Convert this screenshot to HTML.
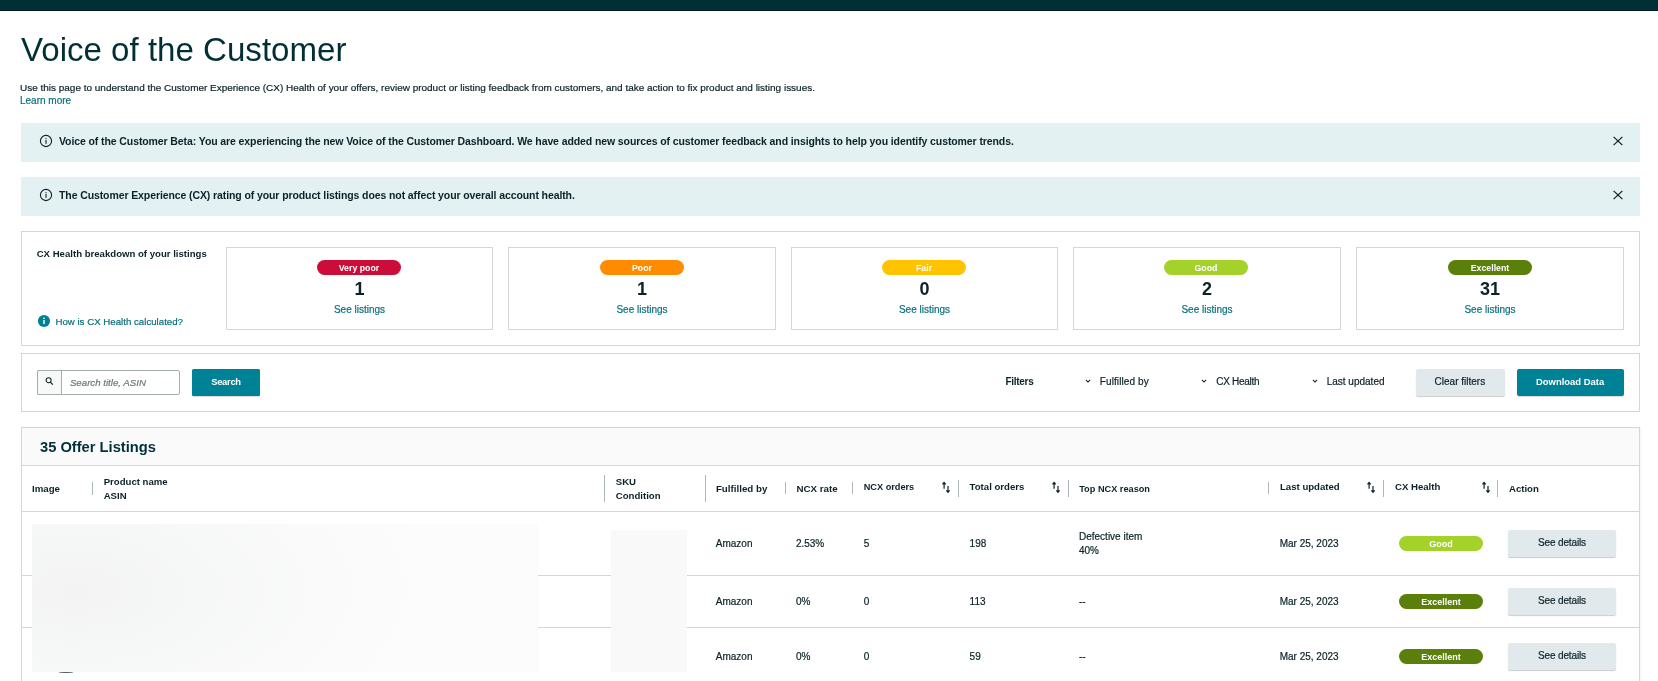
<!DOCTYPE html>
<html><head><meta charset="utf-8"><title>Voice of the Customer</title>
<style>
html,body{margin:0;padding:0;background:#fff;}
body{width:1658px;height:681px;overflow:hidden;position:relative;font-family:"Liberation Sans", sans-serif;}
div{box-sizing:content-box;}
</style></head><body>
<div style="position:absolute;left:0;top:0;width:1658px;height:681px;will-change:transform">
<div style="position:absolute;left:0px;top:0px;width:1658px;height:10px;background:#012F36;border-bottom:1px solid #001F25"></div>
<div style="position:absolute;top:33.00px;font-size:33.1px;line-height:33.1px;color:#002F36;font-weight:normal;white-space:nowrap;left:21.00px;">Voice of the Customer</div>
<div style="position:absolute;top:83.00px;font-size:9.97px;line-height:9.97px;color:#0B2227;font-weight:normal;white-space:nowrap;-webkit-text-stroke:0.2px #0B2227;left:20.00px;">Use this page to understand the Customer Experience (CX) Health of your offers, review product or listing feedback from customers, and take action to fix product and listing issues.</div>
<div style="position:absolute;top:96.00px;font-size:10px;line-height:10px;color:#0A6F7D;font-weight:normal;white-space:nowrap;-webkit-text-stroke:0.2px #0A6F7D;left:20.00px;">Learn more</div>
<div style="position:absolute;left:21px;top:123px;width:1619px;height:39px;background:#E3F1F3"></div>
<svg style="position:absolute;left:38.8px;top:133.8px" width="14" height="14" viewBox="0 0 14 14"><circle cx="7" cy="7" r="5.6" fill="none" stroke="#0B2227" stroke-width="1.1"/><rect x="6.45" y="6" width="1.1" height="3.8" fill="#0B2227"/><rect x="6.45" y="4.1" width="1.1" height="1.1" fill="#0B2227"/></svg>
<div style="position:absolute;top:136.00px;font-size:10.5px;line-height:10.5px;color:#0B2227;font-weight:bold;white-space:nowrap;left:59.00px;letter-spacing:-0.1px;">Voice of the Customer Beta: You are experiencing the new Voice of the Customer Dashboard. We have added new sources of customer feedback and insights to help you identify customer trends.</div>
<svg style="position:absolute;left:1611.5px;top:135.1px" width="12" height="12" viewBox="0 0 12 12"><path d="M1.6 1.9L10.4 10.1M10.4 1.9L1.6 10.1" stroke="#0B2227" stroke-width="1.25" fill="none"/></svg>
<div style="position:absolute;left:21px;top:177px;width:1619px;height:39px;background:#E3F1F3"></div>
<svg style="position:absolute;left:38.8px;top:187.8px" width="14" height="14" viewBox="0 0 14 14"><circle cx="7" cy="7" r="5.6" fill="none" stroke="#0B2227" stroke-width="1.1"/><rect x="6.45" y="6" width="1.1" height="3.8" fill="#0B2227"/><rect x="6.45" y="4.1" width="1.1" height="1.1" fill="#0B2227"/></svg>
<div style="position:absolute;top:190.00px;font-size:10.5px;line-height:10.5px;color:#0B2227;font-weight:bold;white-space:nowrap;left:59.00px;letter-spacing:-0.1px;">The Customer Experience (CX) rating of your product listings does not affect your overall account health.</div>
<svg style="position:absolute;left:1611.5px;top:189.1px" width="12" height="12" viewBox="0 0 12 12"><path d="M1.6 1.9L10.4 10.1M10.4 1.9L1.6 10.1" stroke="#0B2227" stroke-width="1.25" fill="none"/></svg>
<div style="position:absolute;left:21px;top:231px;width:1617px;height:113px;border:1px solid #D5D6D6"></div>
<div style="position:absolute;top:249.00px;font-size:9.6px;line-height:9.6px;color:#0B2227;font-weight:bold;white-space:nowrap;left:36.70px;">CX Health breakdown of your listings</div>
<svg style="position:absolute;left:37px;top:313.9px" width="14" height="14" viewBox="0 0 14 14"><circle cx="7" cy="7" r="6.1" fill="#008296"/><rect x="6.3" y="6" width="1.4" height="4" fill="#fff"/><rect x="6.3" y="3.6" width="1.4" height="1.4" fill="#fff"/></svg>
<div style="position:absolute;top:317.00px;font-size:9.7px;line-height:9.7px;color:#0A6F7D;font-weight:normal;white-space:nowrap;-webkit-text-stroke:0.2px #0A6F7D;left:55.40px;">How is CX Health calculated?</div>
<div style="position:absolute;left:226px;top:247px;width:265px;height:81px;border:1px solid #D5D6D6"></div>
<div style="position:absolute;left:317px;top:260px;width:84px;height:15px;background:#CC0C39;border-radius:8px"></div>
<div style="position:absolute;top:264.00px;font-size:8.8px;line-height:8.8px;color:#fff;font-weight:bold;white-space:nowrap;left:59.00px;width:600px;text-align:center;">Very poor</div>
<div style="position:absolute;top:280.00px;font-size:18px;line-height:18px;color:#0B2227;font-weight:bold;white-space:nowrap;left:59.50px;width:600px;text-align:center;">1</div>
<div style="position:absolute;top:305.00px;font-size:10px;line-height:10px;color:#0A6F7D;font-weight:normal;white-space:nowrap;-webkit-text-stroke:0.2px #0A6F7D;left:59.50px;width:600px;text-align:center;">See listings</div>
<div style="position:absolute;left:508px;top:247px;width:266px;height:81px;border:1px solid #D5D6D6"></div>
<div style="position:absolute;left:600px;top:260px;width:84px;height:15px;background:#FF8C00;border-radius:8px"></div>
<div style="position:absolute;top:264.00px;font-size:8.8px;line-height:8.8px;color:#fff;font-weight:bold;white-space:nowrap;left:342.00px;width:600px;text-align:center;">Poor</div>
<div style="position:absolute;top:280.00px;font-size:18px;line-height:18px;color:#0B2227;font-weight:bold;white-space:nowrap;left:342.00px;width:600px;text-align:center;">1</div>
<div style="position:absolute;top:305.00px;font-size:10px;line-height:10px;color:#0A6F7D;font-weight:normal;white-space:nowrap;-webkit-text-stroke:0.2px #0A6F7D;left:342.00px;width:600px;text-align:center;">See listings</div>
<div style="position:absolute;left:791px;top:247px;width:265px;height:81px;border:1px solid #D5D6D6"></div>
<div style="position:absolute;left:882px;top:260px;width:84px;height:15px;background:#FFC300;border-radius:8px"></div>
<div style="position:absolute;top:264.00px;font-size:8.8px;line-height:8.8px;color:#fff;font-weight:bold;white-space:nowrap;left:624.00px;width:600px;text-align:center;">Fair</div>
<div style="position:absolute;top:280.00px;font-size:18px;line-height:18px;color:#0B2227;font-weight:bold;white-space:nowrap;left:624.50px;width:600px;text-align:center;">0</div>
<div style="position:absolute;top:305.00px;font-size:10px;line-height:10px;color:#0A6F7D;font-weight:normal;white-space:nowrap;-webkit-text-stroke:0.2px #0A6F7D;left:624.50px;width:600px;text-align:center;">See listings</div>
<div style="position:absolute;left:1073px;top:247px;width:266px;height:81px;border:1px solid #D5D6D6"></div>
<div style="position:absolute;left:1164px;top:260px;width:84px;height:15px;background:#A4D12A;border-radius:8px"></div>
<div style="position:absolute;top:264.00px;font-size:8.8px;line-height:8.8px;color:#fff;font-weight:bold;white-space:nowrap;left:906.00px;width:600px;text-align:center;">Good</div>
<div style="position:absolute;top:280.00px;font-size:18px;line-height:18px;color:#0B2227;font-weight:bold;white-space:nowrap;left:907.00px;width:600px;text-align:center;">2</div>
<div style="position:absolute;top:305.00px;font-size:10px;line-height:10px;color:#0A6F7D;font-weight:normal;white-space:nowrap;-webkit-text-stroke:0.2px #0A6F7D;left:907.00px;width:600px;text-align:center;">See listings</div>
<div style="position:absolute;left:1356px;top:247px;width:266px;height:81px;border:1px solid #D5D6D6"></div>
<div style="position:absolute;left:1448px;top:260px;width:84px;height:15px;background:#5A7F0B;border-radius:8px"></div>
<div style="position:absolute;top:264.00px;font-size:8.8px;line-height:8.8px;color:#fff;font-weight:bold;white-space:nowrap;left:1190.00px;width:600px;text-align:center;">Excellent</div>
<div style="position:absolute;top:280.00px;font-size:18px;line-height:18px;color:#0B2227;font-weight:bold;white-space:nowrap;left:1190.00px;width:600px;text-align:center;">31</div>
<div style="position:absolute;top:305.00px;font-size:10px;line-height:10px;color:#0A6F7D;font-weight:normal;white-space:nowrap;-webkit-text-stroke:0.2px #0A6F7D;left:1190.00px;width:600px;text-align:center;">See listings</div>
<div style="position:absolute;left:21px;top:353px;width:1617px;height:57px;border:1px solid #D5D6D6"></div>
<div style="position:absolute;left:37px;top:370px;width:24px;height:23px;border:1px solid #A6ADAD;border-right:none;background:#F7F8F8;border-radius:2px 0 0 2px"></div>
<div style="position:absolute;left:61px;top:370px;width:117px;height:23px;border:1px solid #A6ADAD;border-radius:0 2px 2px 0"></div>
<svg style="position:absolute;left:43px;top:375px" width="12" height="12" viewBox="0 0 12 12"><circle cx="5.6" cy="5.2" r="2.5" fill="none" stroke="#0B2227" stroke-width="1.05"/><path d="M7.4 7.1L9.8 9.6" stroke="#0B2227" stroke-width="1.2"/></svg>
<div style="position:absolute;top:378.00px;font-size:9.7px;line-height:9.7px;color:#6B7878;font-weight:normal;white-space:nowrap;-webkit-text-stroke:0.2px #6B7878;font-style:italic;left:69.90px;">Search title, ASIN</div>
<div style="position:absolute;left:192px;top:369px;width:68px;height:27px;background:#008296;border-radius:1.5px;box-shadow:0 1px 1px rgba(0,0,0,.15)"></div>
<div style="position:absolute;top:377.00px;font-size:9.4px;line-height:9.4px;color:#fff;font-weight:bold;white-space:nowrap;left:-74.00px;width:600px;text-align:center;letter-spacing:-0.3px;">Search</div>
<div style="position:absolute;top:377.00px;font-size:10px;line-height:10px;color:#0B2227;font-weight:bold;white-space:nowrap;left:1005.40px;letter-spacing:-0.28px;">Filters</div>
<svg style="position:absolute;left:1084.4px;top:377.4px" width="8" height="8" viewBox="0 0 8 8"><path d="M1.9 2.9L4 5.0L6.1 2.9" stroke="#0B2227" stroke-width="1.05" fill="none"/></svg>
<div style="position:absolute;top:377.00px;font-size:10px;line-height:10px;color:#0B2227;font-weight:normal;white-space:nowrap;-webkit-text-stroke:0.2px #0B2227;left:1099.80px;letter-spacing:0.1px;">Fulfilled by</div>
<svg style="position:absolute;left:1200.3px;top:377.4px" width="8" height="8" viewBox="0 0 8 8"><path d="M1.9 2.9L4 5.0L6.1 2.9" stroke="#0B2227" stroke-width="1.05" fill="none"/></svg>
<div style="position:absolute;top:377.00px;font-size:10px;line-height:10px;color:#0B2227;font-weight:normal;white-space:nowrap;-webkit-text-stroke:0.2px #0B2227;left:1216.20px;letter-spacing:-0.27px;">CX Health</div>
<svg style="position:absolute;left:1311.3px;top:377.4px" width="8" height="8" viewBox="0 0 8 8"><path d="M1.9 2.9L4 5.0L6.1 2.9" stroke="#0B2227" stroke-width="1.05" fill="none"/></svg>
<div style="position:absolute;top:377.00px;font-size:10px;line-height:10px;color:#0B2227;font-weight:normal;white-space:nowrap;-webkit-text-stroke:0.2px #0B2227;left:1326.70px;">Last updated</div>
<div style="position:absolute;left:1416px;top:369px;width:89px;height:27px;background:#E2E9EC;border-radius:2px;box-shadow:0 1px 1px rgba(0,0,0,.2)"></div>
<div style="position:absolute;top:377.00px;font-size:10px;line-height:10px;color:#0B2227;font-weight:normal;white-space:nowrap;-webkit-text-stroke:0.2px #0B2227;left:1434.60px;">Clear filters</div>
<div style="position:absolute;left:1517px;top:369px;width:107px;height:27px;background:#008296;border-radius:2px;box-shadow:0 1px 1px rgba(0,0,0,.15)"></div>
<div style="position:absolute;top:377.00px;font-size:9.45px;line-height:9.45px;color:#fff;font-weight:bold;white-space:nowrap;left:1536.00px;">Download Data</div>
<div style="position:absolute;left:21px;top:427px;width:1617px;height:260px;border:1px solid #D5D6D6;box-shadow:1px 1px 2px rgba(0,0,0,0.05)"></div>
<div style="position:absolute;left:22px;top:428px;width:1617px;height:37px;background:#FAFAFA;border-bottom:1px solid #D5D6D6"></div>
<div style="position:absolute;top:440.00px;font-size:14.7px;line-height:14.7px;color:#002F36;font-weight:bold;white-space:nowrap;left:40.00px;">35 Offer Listings</div>
<div style="position:absolute;left:92px;top:482.4px;width:1px;height:12.600000000000023px;background:#AEB7B7"></div>
<div style="position:absolute;left:604px;top:475px;width:1px;height:26.5px;background:#AEB7B7"></div>
<div style="position:absolute;left:705px;top:475px;width:1px;height:26.5px;background:#AEB7B7"></div>
<div style="position:absolute;left:785px;top:482.3px;width:1px;height:12.099999999999966px;background:#AEB7B7"></div>
<div style="position:absolute;left:852px;top:482.3px;width:1px;height:12.099999999999966px;background:#AEB7B7"></div>
<div style="position:absolute;left:958px;top:480px;width:1px;height:17px;background:#AEB7B7"></div>
<div style="position:absolute;left:1068px;top:480px;width:1px;height:17px;background:#AEB7B7"></div>
<div style="position:absolute;left:1268px;top:482.3px;width:1px;height:12.099999999999966px;background:#AEB7B7"></div>
<div style="position:absolute;left:1383px;top:480px;width:1px;height:17px;background:#AEB7B7"></div>
<div style="position:absolute;left:1497px;top:480px;width:1px;height:17px;background:#AEB7B7"></div>
<div style="position:absolute;top:484.00px;font-size:9.7px;line-height:9.7px;color:#0B2227;font-weight:bold;white-space:nowrap;left:32.00px;">Image</div>
<div style="position:absolute;top:477.00px;font-size:9.6px;line-height:9.6px;color:#0B2227;font-weight:bold;white-space:nowrap;left:103.70px;">Product name</div>
<div style="position:absolute;top:491.00px;font-size:9.6px;line-height:9.6px;color:#0B2227;font-weight:bold;white-space:nowrap;left:103.70px;">ASIN</div>
<div style="position:absolute;top:477.00px;font-size:9.6px;line-height:9.6px;color:#0B2227;font-weight:bold;white-space:nowrap;left:615.80px;">SKU</div>
<div style="position:absolute;top:491.00px;font-size:9.6px;line-height:9.6px;color:#0B2227;font-weight:bold;white-space:nowrap;left:615.80px;">Condition</div>
<div style="position:absolute;top:484.00px;font-size:9.75px;line-height:9.75px;color:#0B2227;font-weight:bold;white-space:nowrap;left:715.90px;">Fulfilled by</div>
<div style="position:absolute;top:484.00px;font-size:9.75px;line-height:9.75px;color:#0B2227;font-weight:bold;white-space:nowrap;left:796.40px;">NCX rate</div>
<div style="position:absolute;top:483.00px;font-size:9.2px;line-height:9.2px;color:#0B2227;font-weight:bold;white-space:nowrap;left:863.70px;">NCX orders</div>
<div style="position:absolute;top:482.00px;font-size:9.6px;line-height:9.6px;color:#0B2227;font-weight:bold;white-space:nowrap;left:969.60px;">Total orders</div>
<div style="position:absolute;top:485.00px;font-size:9.2px;line-height:9.2px;color:#0B2227;font-weight:bold;white-space:nowrap;left:1079.20px;">Top NCX reason</div>
<div style="position:absolute;top:482.00px;font-size:9.6px;line-height:9.6px;color:#0B2227;font-weight:bold;white-space:nowrap;left:1280.00px;">Last updated</div>
<div style="position:absolute;top:482.00px;font-size:9.6px;line-height:9.6px;color:#0B2227;font-weight:bold;white-space:nowrap;left:1395.00px;">CX Health</div>
<div style="position:absolute;top:484.00px;font-size:9.6px;line-height:9.6px;color:#0B2227;font-weight:bold;white-space:nowrap;left:1509.00px;">Action</div>
<svg style="position:absolute;left:941.5px;top:481px" width="10" height="13" viewBox="0 0 10 13"><path d="M2.1 7.7V1.6M6.0 5.1V11.2M0.5 3.4L2.1 1.4L3.7 3.4M4.4 9.4L6.0 11.4L7.6 9.4" stroke="#0B2227" stroke-width="1.2" fill="none"/></svg>
<svg style="position:absolute;left:1051.9px;top:481px" width="10" height="13" viewBox="0 0 10 13"><path d="M2.1 7.7V1.6M6.0 5.1V11.2M0.5 3.4L2.1 1.4L3.7 3.4M4.4 9.4L6.0 11.4L7.6 9.4" stroke="#0B2227" stroke-width="1.2" fill="none"/></svg>
<svg style="position:absolute;left:1367px;top:481px" width="10" height="13" viewBox="0 0 10 13"><path d="M2.1 7.7V1.6M6.0 5.1V11.2M0.5 3.4L2.1 1.4L3.7 3.4M4.4 9.4L6.0 11.4L7.6 9.4" stroke="#0B2227" stroke-width="1.2" fill="none"/></svg>
<svg style="position:absolute;left:1481.5px;top:481px" width="10" height="13" viewBox="0 0 10 13"><path d="M2.1 7.7V1.6M6.0 5.1V11.2M0.5 3.4L2.1 1.4L3.7 3.4M4.4 9.4L6.0 11.4L7.6 9.4" stroke="#0B2227" stroke-width="1.2" fill="none"/></svg>
<div style="position:absolute;left:22px;top:511px;width:1617px;height:1px;background:#D5D6D6"></div>
<div style="position:absolute;left:22px;top:575px;width:1617px;height:1px;background:#D5D6D6"></div>
<div style="position:absolute;left:22px;top:627px;width:1617px;height:1px;background:#D5D6D6"></div>
<div style="position:absolute;top:539.00px;font-size:10px;line-height:10px;color:#0B2227;font-weight:normal;white-space:nowrap;-webkit-text-stroke:0.2px #0B2227;left:715.80px;">Amazon</div>
<div style="position:absolute;top:539.00px;font-size:10px;line-height:10px;color:#0B2227;font-weight:normal;white-space:nowrap;-webkit-text-stroke:0.2px #0B2227;left:795.90px;">2.53%</div>
<div style="position:absolute;top:539.00px;font-size:10px;line-height:10px;color:#0B2227;font-weight:normal;white-space:nowrap;-webkit-text-stroke:0.2px #0B2227;left:863.70px;">5</div>
<div style="position:absolute;top:539.00px;font-size:10px;line-height:10px;color:#0B2227;font-weight:normal;white-space:nowrap;-webkit-text-stroke:0.2px #0B2227;left:969.60px;">198</div>
<div style="position:absolute;top:532.00px;font-size:10px;line-height:10px;color:#0B2227;font-weight:normal;white-space:nowrap;-webkit-text-stroke:0.2px #0B2227;left:1079.00px;">Defective item</div>
<div style="position:absolute;top:546.00px;font-size:10px;line-height:10px;color:#0B2227;font-weight:normal;white-space:nowrap;-webkit-text-stroke:0.2px #0B2227;left:1079.00px;">40%</div>
<div style="position:absolute;top:539.00px;font-size:10px;line-height:10px;color:#0B2227;font-weight:normal;white-space:nowrap;-webkit-text-stroke:0.2px #0B2227;left:1279.70px;">Mar 25, 2023</div>
<div style="position:absolute;left:1399px;top:536px;width:84px;height:15px;background:#A4D12A;border-radius:8px"></div>
<div style="position:absolute;top:540.00px;font-size:9px;line-height:9px;color:#fff;font-weight:bold;white-space:nowrap;left:1141.00px;width:600px;text-align:center;">Good</div>
<div style="position:absolute;left:1507.5px;top:530px;width:108.5px;height:27px;background:#E2E9EC;border-radius:2px;box-shadow:0 1px 1px rgba(0,0,0,.2)"></div>
<div style="position:absolute;top:538.00px;font-size:10px;line-height:10px;color:#0B2227;font-weight:normal;white-space:nowrap;-webkit-text-stroke:0.2px #0B2227;left:1262.00px;width:600px;text-align:center;letter-spacing:-0.15px;">See details</div>
<div style="position:absolute;top:597.00px;font-size:10px;line-height:10px;color:#0B2227;font-weight:normal;white-space:nowrap;-webkit-text-stroke:0.2px #0B2227;left:715.80px;">Amazon</div>
<div style="position:absolute;top:597.00px;font-size:10px;line-height:10px;color:#0B2227;font-weight:normal;white-space:nowrap;-webkit-text-stroke:0.2px #0B2227;left:795.90px;">0%</div>
<div style="position:absolute;top:597.00px;font-size:10px;line-height:10px;color:#0B2227;font-weight:normal;white-space:nowrap;-webkit-text-stroke:0.2px #0B2227;left:863.70px;">0</div>
<div style="position:absolute;top:597.00px;font-size:10px;line-height:10px;color:#0B2227;font-weight:normal;white-space:nowrap;-webkit-text-stroke:0.2px #0B2227;left:969.60px;">113</div>
<div style="position:absolute;top:597.00px;font-size:10px;line-height:10px;color:#0B2227;font-weight:normal;white-space:nowrap;-webkit-text-stroke:0.2px #0B2227;left:1079.00px;">--</div>
<div style="position:absolute;top:597.00px;font-size:10px;line-height:10px;color:#0B2227;font-weight:normal;white-space:nowrap;-webkit-text-stroke:0.2px #0B2227;left:1279.70px;">Mar 25, 2023</div>
<div style="position:absolute;left:1399px;top:594px;width:84px;height:15px;background:#5A7F0B;border-radius:8px"></div>
<div style="position:absolute;top:598.00px;font-size:9px;line-height:9px;color:#fff;font-weight:bold;white-space:nowrap;left:1141.00px;width:600px;text-align:center;">Excellent</div>
<div style="position:absolute;left:1507.5px;top:588px;width:108.5px;height:27px;background:#E2E9EC;border-radius:2px;box-shadow:0 1px 1px rgba(0,0,0,.2)"></div>
<div style="position:absolute;top:596.00px;font-size:10px;line-height:10px;color:#0B2227;font-weight:normal;white-space:nowrap;-webkit-text-stroke:0.2px #0B2227;left:1262.00px;width:600px;text-align:center;letter-spacing:-0.15px;">See details</div>
<div style="position:absolute;top:652.00px;font-size:10px;line-height:10px;color:#0B2227;font-weight:normal;white-space:nowrap;-webkit-text-stroke:0.2px #0B2227;left:715.80px;">Amazon</div>
<div style="position:absolute;top:652.00px;font-size:10px;line-height:10px;color:#0B2227;font-weight:normal;white-space:nowrap;-webkit-text-stroke:0.2px #0B2227;left:795.90px;">0%</div>
<div style="position:absolute;top:652.00px;font-size:10px;line-height:10px;color:#0B2227;font-weight:normal;white-space:nowrap;-webkit-text-stroke:0.2px #0B2227;left:863.70px;">0</div>
<div style="position:absolute;top:652.00px;font-size:10px;line-height:10px;color:#0B2227;font-weight:normal;white-space:nowrap;-webkit-text-stroke:0.2px #0B2227;left:969.60px;">59</div>
<div style="position:absolute;top:652.00px;font-size:10px;line-height:10px;color:#0B2227;font-weight:normal;white-space:nowrap;-webkit-text-stroke:0.2px #0B2227;left:1079.00px;">--</div>
<div style="position:absolute;top:652.00px;font-size:10px;line-height:10px;color:#0B2227;font-weight:normal;white-space:nowrap;-webkit-text-stroke:0.2px #0B2227;left:1279.70px;">Mar 25, 2023</div>
<div style="position:absolute;left:1399px;top:649.2px;width:84px;height:15px;background:#5A7F0B;border-radius:8px"></div>
<div style="position:absolute;top:653.00px;font-size:9px;line-height:9px;color:#fff;font-weight:bold;white-space:nowrap;left:1141.00px;width:600px;text-align:center;">Excellent</div>
<div style="position:absolute;left:1507.5px;top:643.2px;width:108.5px;height:27px;background:#E2E9EC;border-radius:2px;box-shadow:0 1px 1px rgba(0,0,0,.2)"></div>
<div style="position:absolute;top:651.00px;font-size:10px;line-height:10px;color:#0B2227;font-weight:normal;white-space:nowrap;-webkit-text-stroke:0.2px #0B2227;left:1262.00px;width:600px;text-align:center;letter-spacing:-0.15px;">See details</div>
<div style="position:absolute;left:32px;top:523.5px;width:505.5px;height:148.5px;background:radial-gradient(ellipse 70% 120% at 9% 45%, #F3F3F3 0%, #F6F7F7 35%, #FAFAFB 70%, #FCFCFC 100%)"></div>
<div style="position:absolute;left:611px;top:530px;width:76px;height:142px;background:#F9F9FA"></div>
<div style="position:absolute;left:59px;top:672px;width:14px;height:1px;background:#4A5A60;border-radius:50% 50% 0 0"></div>
</div>
</body></html>
